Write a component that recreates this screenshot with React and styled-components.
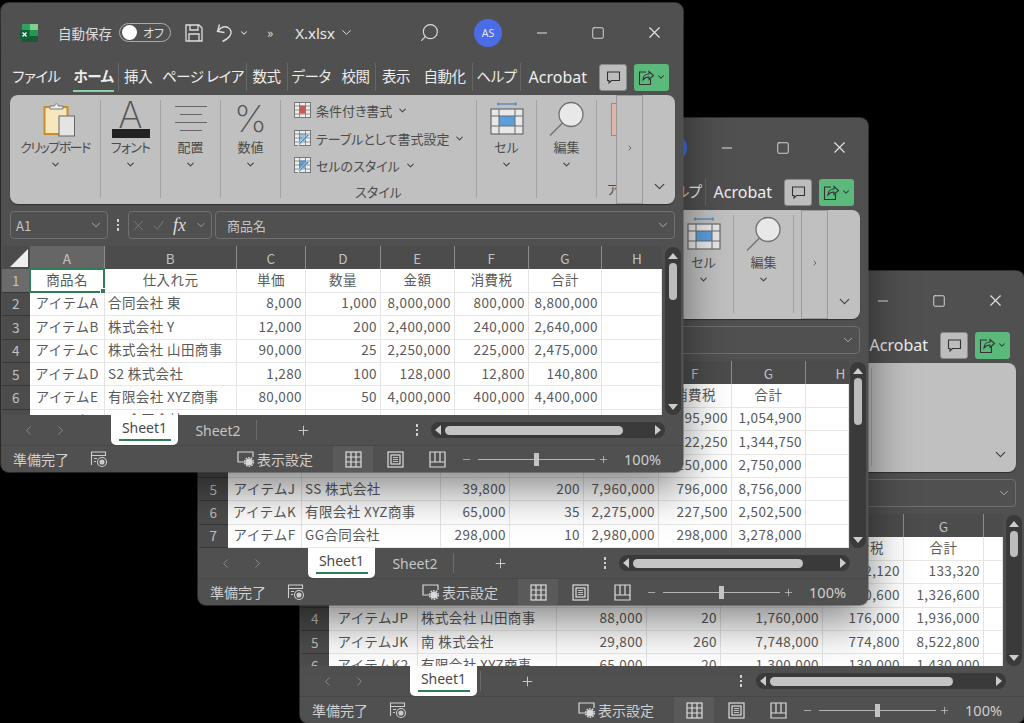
import React from "react";
import styled, { createGlobalStyle } from "styled-components";
import { ChevronDown, ChevronLeft, ChevronRight, Minus, Plus, Search, Square, X } from "lucide-react";

const GlobalStyle = createGlobalStyle`
  html, body {
    margin: 0;
    background: #000;
  }
  #root {
    position: relative;
    width: 1024px;
    height: 723px;
    overflow: hidden;
    font-family: "Noto Sans CJK JP", "Noto Sans", sans-serif;
  }
`;

const Frame = styled.section`
  position: absolute;
  left: ${(p) => p.$x}px;
  top: ${(p) => p.$y}px;
  width: ${(p) => p.$w}px;
  height: ${(p) => p.$h}px;
  display: flex;
  flex-direction: column;
  box-sizing: border-box;
  background: #505050;
  border-radius: 8px;
  overflow: hidden;
  box-shadow: 0 16px 46px rgba(0, 0, 0, 0.5), 0 0 0 1px rgba(110, 110, 110, 0.5);
  color: #e4e4e4;
`;

const TitleBar = styled.header`
  height: 59px;
  flex: none;
  display: flex;
  align-items: center;
  padding: 0 1px 0 18px;
`;

const AutoSave = styled.span`
  margin-left: 19px;
  font-size: 13.5px;
  font-feature-settings: "palt";
  white-space: nowrap;
  color: #ddd;
`;

const Toggle = styled.span`
  margin-left: 7px;
  width: 52px;
  height: 19px;
  box-sizing: border-box;
  display: flex;
  align-items: center;
  justify-content: space-between;
  padding: 0 6px 0 2px;
  border: 1px solid #aaa;
  border-radius: 10px;
  font-size: 12px;
  font-feature-settings: "palt";
  color: #ddd;
  &::before {
    content: "";
    width: 15px;
    height: 15px;
    border-radius: 50%;
    background: #fff;
  }
`;

const QuickIcon = styled.span`
  display: flex;
  margin-left: ${(p) => p.$gap}px;
  color: #ddd;
`;

const SearchIcon = styled(Search)`
  transform: scaleX(-1);
  color: #ddd;
`;

const Overflow = styled.span`
  margin-left: 18px;
  font-size: 13px;
  color: #ddd;
`;

const FileName = styled.span`
  margin-left: 22px;
  font-family: "Noto Sans", sans-serif;
  font-size: 15px;
  color: #e8e8e8;
`;

const TitleRight = styled.div`
  margin-left: auto;
  display: flex;
  align-items: center;
`;

const Avatar = styled.span`
  width: 28px;
  height: 28px;
  margin: 0 12px 0 34px;
  border-radius: 50%;
  background: #4a6ce6;
  display: flex;
  align-items: center;
  justify-content: center;
  font-family: "Noto Sans", sans-serif;
  font-size: 10.5px;
  color: #dfe6ff;
`;

const WinButton = styled.span`
  width: 56px;
  display: flex;
  justify-content: center;
  color: #e4e4e4;
`;

const TabRow = styled.nav`
  height: 33px;
  flex: none;
  box-sizing: border-box;
  display: flex;
  align-items: center;
  padding: 0 14px 3px 13px;
`;

const TabList = styled.div`
  display: flex;
  align-items: center;
  height: 100%;
`;

const Tab = styled.span`
  flex: none;
  box-sizing: border-box;
  width: ${(p) => p.$w}px;
  overflow: ${(p) => (p.$clip ? "hidden" : "visible")};
  margin-right: ${(p) => p.$gap || 0}px;
  display: flex;
  justify-content: ${(p) => (p.$clip ? "flex-start" : "center")};
  font-size: 14.5px;
  letter-spacing: -0.5px;
  line-height: 28px;
  white-space: nowrap;
  font-weight: ${(p) => (p.$active ? 700 : 400)};
  font-feature-settings: "palt";
  color: #ececec;
  border-bottom: 2px solid ${(p) => (p.$active ? "#8cd0a8" : "transparent")};
`;

const TabDivider = styled.i`
  flex: none;
  width: 1px;
  height: 28px;
  margin: 0 4px 0 ${(p) => p.$before}px;
  background: #666;
`;

const TabRight = styled.div`
  margin-left: auto;
  display: flex;
  align-items: center;
`;

const AcrobatTab = styled.span`
  font-family: "Noto Sans", sans-serif;
  font-size: 16px;
  color: #eee;
`;

const CommentButton = styled.span`
  width: 28px;
  height: 27px;
  margin-left: 12px;
  box-sizing: border-box;
  display: flex;
  align-items: center;
  justify-content: center;
  border-radius: 3px;
  background: #bdbdbd;
  border: 1px solid #8a8a8a;
`;

const ShareButton = styled.span`
  width: 35px;
  height: 27px;
  margin-left: 7px;
  display: flex;
  align-items: center;
  justify-content: center;
  gap: 1px;
  border-radius: 3px;
  background: #5bb97b;
  color: #333;
`;

const Ribbon = styled.div`
  flex: none;
  height: 109px;
  margin: 0 8px 0 9px;
  display: flex;
  border-radius: 8px;
  overflow: hidden;
  background: #c0c0c0;
  box-shadow: 0 1px 1px rgba(0, 0, 0, 0.4);
  color: #4c4c4c;
`;

const GroupList = styled.div`
  flex: 1;
  min-width: 0;
  display: flex;
  overflow: hidden;
  padding: 5px 0 6px;
`;

const Group = styled.div`
  flex: none;
  width: ${(p) => p.$w}px;
  box-sizing: border-box;
  display: flex;
  flex-direction: column;
  align-items: center;
  border-right: ${(p) => (p.$last ? "none" : "1px solid #a3a3a3")};
`;

const BigIcon = styled.div`
  height: 38px;
  display: flex;
  align-items: center;
  justify-content: center;
  padding-left: ${(p) => p.$shift || 0}px;
`;

const GroupLabel = styled.span`
  font-size: 13px;
  line-height: 18px;
  white-space: nowrap;
  font-feature-settings: "palt";
  letter-spacing: ${(p) => p.$track || 0}px;
`;

const BottomLabel = styled(GroupLabel)`
  margin-bottom: -3px;
`;

const GroupChevron = styled.span`
  display: flex;
  margin-top: 3px;
  color: #444;
`;

const FontLetter = styled.span`
  display: block;
  font-family: "Inter", sans-serif;
  font-weight: 200;
  font-size: 37px;
  line-height: 29px;
  color: #555;
  text-align: center;
`;

const FontBar = styled.span`
  display: block;
  width: 38px;
  height: 9px;
  background: #222;
`;

const Percent = styled.span`
  font-family: "Inter", sans-serif;
  font-weight: 200;
  font-size: 37px;
  line-height: 38px;
  color: #555;
`;

const StyleRows = styled.div`
  flex: 1;
  align-self: stretch;
  margin-top: -3px;
  padding-left: 13px;
  display: flex;
  flex-direction: column;
`;

const StyleRow = styled.div`
  height: 27.5px;
  flex: none;
  display: flex;
  align-items: center;
  gap: 5px;
  font-size: 13px;
  font-feature-settings: "palt";
  white-space: nowrap;
`;

const ClippedLabel = styled(GroupLabel)`
  align-self: flex-start;
  margin: auto 0 0 10px;
`;

const ClippedIcon = styled.span`
  display: block;
  align-self: flex-start;
  width: 10px;
  height: 33px;
  margin: 3px 0 0 14px;
  box-sizing: border-box;
  border: 1px solid #c9786c;
  background: #e0b5ac;
`;

const OverflowPanel = styled.div`
  flex: none;
  width: 27px;
  box-sizing: border-box;
  display: flex;
  align-items: center;
  justify-content: center;
  border: 1px solid #9a9a9a;
  color: #555;
  padding-bottom: 4px;
`;

const CollapseArea = styled.div`
  flex: none;
  width: 32px;
  display: flex;
  align-items: flex-end;
  justify-content: center;
  padding-bottom: 9px;
  color: #3c3c3c;
`;

const FormulaRow = styled.div`
  flex: none;
  height: 28px;
  margin: 7px 8px 7px 9px;
  display: flex;
  gap: 3px;
  color: #c4c4c4;
`;

const FieldBox = styled.div`
  flex: ${(p) => (p.$grow ? 1 : "none")};
  width: ${(p) => (p.$w ? `${p.$w}px` : "auto")};
  box-sizing: border-box;
  display: flex;
  align-items: center;
  gap: ${(p) => p.$gap || 9}px;
  padding: 0 4px 0 ${(p) => p.$pad}px;
  border: 1px solid #707070;
  border-radius: 4px;
  font-size: 13px;
`;

const FieldEnd = styled.span`
  display: flex;
  margin-left: auto;
  color: #bbb;
`;

const FxText = styled.span`
  font-family: "Liberation Serif", serif;
  font-style: italic;
  font-size: 18px;
  color: #ddd;
`;

const DotsBox = styled.span`
  width: 14px;
  display: flex;
  align-items: center;
  justify-content: center;
`;

const Dots = styled.span`
  display: flex;
  flex-direction: column;
  gap: 2px;
  i {
    display: block;
    width: 2.5px;
    height: 2.5px;
    background: #d0d0d0;
  }
`;

const GridArea = styled.div`
  flex: 1;
  min-height: 0;
  display: flex;
  padding-left: 1px;
`;

const SheetClip = styled.div`
  overflow: hidden;
`;

const Sheet = styled.div`
  display: grid;
  grid-template-columns: ${(p) => p.$cols};
  grid-auto-rows: 23.4px;
  font-size: 13.5px;
  letter-spacing: 0.4px;
`;

const Corner = styled.div`
  background: #4c4c4c;
  display: flex;
  align-items: flex-end;
  justify-content: flex-end;
  padding: 0 2px 2px 0;
  &::after {
    content: "";
    width: 0;
    height: 0;
    border-left: 18px solid transparent;
    border-bottom: 18px solid #ededed;
  }
`;

const ColHead = styled.div`
  display: flex;
  align-items: center;
  justify-content: center;
  box-sizing: border-box;
  padding-left: ${(p) => p.$shift || 0}px;
  background: ${(p) => (p.$on ? "#666" : "#4c4c4c")};
  border-right: 1px solid #8c8c8c;
  font-size: 13.5px;
  color: #c2c2c2;
  &:nth-child(9) {
    border-right: none;
  }
`;

const RowHead = styled.div`
  display: flex;
  align-items: center;
  justify-content: center;
  padding-bottom: 1px;
  background: ${(p) => (p.$on ? "#6b6b6b" : "#4c4c4c")};
  border-bottom: 1px solid #383838;
  box-sizing: border-box;
  color: #c2c2c2;
  font-size: 13.5px;
`;

const Cell = styled.div`
  position: relative;
  display: flex;
  align-items: center;
  justify-content: ${(p) => p.$align};
  padding: 0 ${(p) => (p.$align === "flex-end" ? 3 : 3)}px 3px;
  box-sizing: border-box;
  min-width: 0;
  overflow: ${(p) => (p.$selected ? "visible" : "hidden")};
  white-space: nowrap;
  background: #fff;
  border-right: 1px solid #e4e4e4;
  border-bottom: 1px solid #e8e8e8;
  color: #5a5a5a;
`;

const CellCursor = styled.span`
  position: absolute;
  inset: -1px;
  border: 2px solid #2f7d55;
  &::after {
    content: "";
    position: absolute;
    right: -3px;
    bottom: -3px;
    width: 4px;
    height: 4px;
    background: #2f7d55;
    border: 1px solid #fff;
  }
`;

const VScroll = styled.div`
  margin: 1px 2px 0 auto;
  width: 16px;
  flex: none;
  box-sizing: border-box;
  padding: 6px 0 5px;
  display: flex;
  flex-direction: column;
  align-items: center;
  border-radius: 8px;
  background: #3a3a3a;
`;

const VThumb = styled.span`
  width: 8px;
  height: ${(p) => p.$h}px;
  margin-top: 4px;
  border-radius: 4px;
  background: #bcbcbc;
`;

const Arrow = styled.span`
  width: 0;
  height: 0;
  border-style: solid;
  border-color: transparent;
  ${(p) => p.$dir === "up" && "border-width: 0 5px 6px; border-bottom-color: #ccc;"}
  ${(p) => p.$dir === "down" && "border-width: 6px 5px 0; border-top-color: #ccc; margin-top: auto;"}
  ${(p) => p.$dir === "left" && "border-width: 5px 6px 5px 0; border-right-color: #ccc;"}
  ${(p) => p.$dir === "right" && "border-width: 5px 0 5px 6px; border-left-color: #ccc; margin-left: auto;"}
`;

const SheetBar = styled.div`
  flex: none;
  height: 31px;
  display: flex;
  align-items: flex-start;
  padding: 0 18px 0 20px;
  border-bottom: 1px solid #474747;
  box-sizing: border-box;
`;

const NavArrows = styled.div`
  width: 90px;
  height: 30px;
  flex: none;
  display: flex;
  align-items: center;
  gap: 17px;
  color: #8c8c8c;
`;

const ActiveSheet = styled.div`
  width: 67px;
  height: 30px;
  flex: none;
  display: flex;
  flex-direction: column;
  align-items: center;
  box-sizing: border-box;
  padding-top: 2px;
  background: #fff;
  border-radius: 0 0 5px 5px;
  font-family: "Noto Sans", sans-serif;
  font-size: 14px;
  line-height: 22px;
  color: #4a4a4a;
  &::after {
    content: "";
    width: 52px;
    height: 2px;
    background: #2f7d55;
  }
`;

const SheetName = styled.span`
  width: 76px;
  margin-left: 2px;
  line-height: 32px;
  flex: none;
  text-align: center;
  font-family: "Noto Sans", sans-serif;
  font-size: 14px;
  color: #c4c4c4;
`;

const SheetDivider = styled.i`
  width: 1px;
  height: 20px;
  flex: none;
  margin: 5px 0 0 ${(p) => p.$before || 0}px;
  background: #6c6c6c;
`;

const AddSheet = styled.span`
  width: 92px;
  flex: none;
  height: 30px;
  display: flex;
  align-items: center;
  justify-content: center;
  color: #cfcfcf;
`;

const SheetRight = styled.div`
  margin-left: auto;
  display: flex;
  align-items: center;
  height: 30px;
`;

const HScroll = styled.div`
  width: ${(p) => p.$w}px;
  height: 16px;
  box-sizing: border-box;
  margin-left: ${(p) => p.$gap}px;
  padding: 0 4px;
  display: flex;
  align-items: center;
  border-radius: 8px;
  background: #3a3a3a;
`;

const HThumb = styled.span`
  width: ${(p) => p.$w}px;
  height: 9px;
  margin-left: 4px;
  border-radius: 5px;
  background: #c4c4c4;
`;

const StatusBar = styled.footer`
  flex: none;
  height: 26px;
  display: flex;
  align-items: stretch;
  padding: 0 22px 0 12px;
  font-size: 14px;
  color: #cfcfcf;
`;

const StatusItem = styled.span`
  display: flex;
  align-items: center;
  margin-left: ${(p) => p.$gap || 0}px;
  white-space: nowrap;
`;

const StatusRight = styled.div`
  margin-left: auto;
  display: flex;
  align-items: stretch;
`;

const ViewButton = styled.span`
  width: 40px;
  margin-left: ${(p) => p.$gap || 0}px;
  display: flex;
  align-items: center;
  justify-content: center;
  background: ${(p) => (p.$on ? "#5a5a5a" : "transparent")};
`;

const ZoomTrack = styled.span`
  position: relative;
  display: block;
  align-self: center;
  width: 117px;
  height: 1px;
  margin: 0 3px 0 6px;
  background: #b5b5b5;
  &::after {
    content: "";
    position: absolute;
    left: 56px;
    top: -6px;
    width: 5px;
    height: 13px;
    background: #c4c4c4;
  }
`;

const ZoomValue = styled.span`
  display: flex;
  align-items: center;
  margin-left: 15px;
  font-family: "Noto Sans", sans-serif;
  font-size: 14.5px;
`;

const ExcelLogo = () => (
  <svg width="20" height="20" viewBox="0 0 20 20">
    <rect x="3" y="1" width="16" height="18" rx="1.5" fill="#1f7a45" />
    <rect x="11" y="1" width="8" height="6" fill="#7fd08a" />
    <rect x="3" y="1" width="8" height="6" fill="#2fa35f" />
    <rect x="11" y="7" width="8" height="6" fill="#2b9355" />
    <rect x="3" y="13" width="16" height="6" fill="#155c35" />
    <rect x="1" y="7" width="9" height="9" rx="1" fill="#0f6236" />
    <path d="M3.5 9.5l4 4M7.5 9.5l-4 4" stroke="#fff" strokeWidth="1.3" />
  </svg>
);

const SaveIcon = () => (
  <svg width="18" height="18" viewBox="0 0 18 18" fill="none" stroke="currentColor" strokeWidth="1.3">
    <path d="M1 1h13l3 3v13H1z" />
    <path d="M5 1v5h8V1M4 17v-7h10v7" />
  </svg>
);

const UndoIcon = () => (
  <svg width="18" height="20" viewBox="0 0 18 20" fill="none" stroke="currentColor" strokeWidth="1.4">
    <path d="M3.500 1.500L1.500 8.500l7 1" />
    <path d="M2 8c3-4 7-5 10-3.500 3.500 2 4 6 1.500 9-1.500 2-4 3.500-7 5" />
  </svg>
);

const CancelMark = () => (
  <svg width="15" height="15" viewBox="0 0 15 15" fill="none" stroke="#858585" strokeWidth="1.100">
    <path d="M1 1l13 13M14 1L1 14" />
  </svg>
);

const EnterMark = () => (
  <svg width="16" height="14" viewBox="0 0 16 14" fill="none" stroke="#858585" strokeWidth="1.100">
    <path d="M1 8l5 5L15 1" />
  </svg>
);

const CommentIcon = () => (
  <svg width="15" height="15" viewBox="0 0 15 15" fill="none" stroke="#333" strokeWidth="1.1">
    <path d="M1.5 2h12v8.500H5.500L3 13v-2.500H1.500z" />
  </svg>
);

const ShareIcon = () => (
  <svg width="17" height="17" viewBox="0 0 17 17" fill="none" stroke="#333" strokeWidth="1.1">
    <path d="M8 3H1.500v12.500h11V10" />
    <path d="M5 11c0-4 3-6 6-6V2.500l4.500 4-4.500 4V8c-3 0-4.500 1-6 3z" />
  </svg>
);

const ClipboardIcon = () => (
  <svg width="33" height="35" viewBox="0 0 33 35">
    <rect x="1.500" y="5" width="23" height="27" fill="#f6e7bd" stroke="#c98d2b" strokeWidth="2" />
    <path d="M7 7V4h4.500c.5-3 3.500-3 4 0H20v3z" fill="#eee" stroke="#777" />
    <rect x="16" y="14" width="15.500" height="20" fill="#e4e4e4" stroke="#666" />
  </svg>
);

const AlignIcon = () => (
  <svg width="34" height="28" viewBox="0 0 34 28" stroke="#666" strokeWidth="1.2">
    <path d="M1 1.500h32M6 9.500h22M1 17.500h32M6 25.500h22" />
  </svg>
);

const CellIcon = () => (
  <svg width="34" height="34" viewBox="0 0 34 34">
    <path d="M8 2h18M8 .5v3M26 .5v3" stroke="#2f73b5" strokeWidth="1" fill="none" />
    <rect x="1" y="7" width="32" height="25" fill="#e8e8e8" stroke="#6a6a6a" strokeWidth="1.2" />
    <rect x="9" y="14" width="16" height="10" fill="#5a9fdb" />
    <path d="M1 14h32M1 24h32M9 7v25M25 7v25" stroke="#6a6a6a" strokeWidth="1" />
  </svg>
);

const FindIcon = () => (
  <svg width="36" height="36" viewBox="0 0 36 36">
    <circle cx="22" cy="13.500" r="12" fill="#e8e8e8" stroke="#707070" strokeWidth="1.300" />
    <path d="M13.500 22L1 34.500" stroke="#707070" strokeWidth="1.300" />
  </svg>
);

const StyleIcon = ({ fill, brush }) => (
  <svg width="17" height="17" viewBox="0 0 17 17">
    <rect x=".5" y=".5" width="16" height="15" fill="#eee" stroke="#777" />
    <rect x="5.500" y="3.500" width="6" height="8" fill={fill} />
    <path d="M.5 4h16M.5 8h16M.5 12h16M5.500 .5v15M11.500 .5v15" stroke="#777" strokeWidth=".8" fill="none" />
    {brush && <path d="M15.500 5l-9 9-2.500 2 1-3 8.500-9z" fill="#3a86c6" stroke="#eee" strokeWidth=".7" />}
  </svg>
);

const MacroIcon = () => (
  <svg width="18" height="18" viewBox="0 0 18 18" fill="none" stroke="#cfcfcf" strokeWidth="1.100">
    <path d="M1.500 15V2h14v4M1.500 5.500h14M4 8.500h3M4 11.500h2" />
    <circle cx="12" cy="12" r="4.500" />
    <circle cx="12" cy="12" r="2" fill="#cfcfcf" />
  </svg>
);

const DisplayIcon = () => (
  <svg width="18" height="16" viewBox="0 0 18 16" fill="none" stroke="#d8d8d8" strokeWidth="1.200">
    <path d="M8 11H1V1h15v5" />
    <circle cx="12" cy="11" r="3" fill="#d8d8d8" />
    <circle cx="12" cy="11" r="4.300" strokeDasharray="1.500 1.200" strokeWidth="1.600" />
  </svg>
);

const NormalViewIcon = () => (
  <svg width="17" height="17" viewBox="0 0 17 17" fill="none" stroke="#dcdcdc" strokeWidth="1.200">
    <rect x="1" y="1" width="15" height="15" />
    <path d="M1 6h15M1 11h15M6 1v15M11 1v15" />
  </svg>
);

const PageViewIcon = () => (
  <svg width="17" height="17" viewBox="0 0 17 17" fill="none" stroke="#dcdcdc" strokeWidth="1.200">
    <rect x="1" y="1" width="15" height="15" />
    <rect x="4" y="4" width="9" height="9" />
    <path d="M6 6.500h5M6 8.500h5M6 10.500h5" strokeWidth=".8" />
  </svg>
);

const BreakViewIcon = () => (
  <svg width="17" height="17" viewBox="0 0 17 17" fill="none" stroke="#dcdcdc" strokeWidth="1.200">
    <path d="M1 1h15v15H1zM1 11h15M6 1v10M11 1v10" />
  </svg>
);

const tabs = [
  { label: "ファイル", w: 45, gap: 14 },
  { label: "ホーム", w: 41, active: true },
  { divider: 4 },
  { label: "挿入", w: 30, gap: 9 },
  { label: "ページ レイアウト", clip: true },
  { divider: 2 },
  { label: "数式", w: 31 },
  { divider: 5 },
  { label: "データ", w: 38, gap: 10 },
  { label: "校閲", w: 31 },
  { divider: 4 },
  { label: "表示", w: 32, gap: 9 },
  { label: "自動化", w: 47 },
  { divider: 4 },
  { label: "ヘルプ", w: 39 },
  { divider: 4 },
];

const frontRows = [
  ["商品名", "仕入れ元", "単価", "数量", "金額", "消費税", "合計"],
  ["アイテムA", "合同会社 東", "8,000", "1,000", "8,000,000", "800,000", "8,800,000"],
  ["アイテムB", "株式会社 Y", "12,000", "200", "2,400,000", "240,000", "2,640,000"],
  ["アイテムC", "株式会社 山田商事", "90,000", "25", "2,250,000", "225,000", "2,475,000"],
  ["アイテムD", "S2 株式会社", "1,280", "100", "128,000", "12,800", "140,800"],
  ["アイテムE", "有限会社 XYZ商事", "80,000", "50", "4,000,000", "400,000", "4,400,000"],
  ["アイテムF", "GG合同会社", "298,000", "10", "2,980,000", "298,000", "3,278,000"],
];

const middleRows = [
  ["商品名", "仕入れ元", "単価", "数量", "金額", "消費税", "合計"],
  ["アイテムG", "合同会社 東", "13,700", "70", "959,000", "95,900", "1,054,900"],
  ["アイテムH", "株式会社 Y", "24,450", "50", "1,222,500", "122,250", "1,344,750"],
  ["アイテムI", "株式会社 山田商事", "50,000", "50", "2,500,000", "250,000", "2,750,000"],
  ["アイテムJ", "SS 株式会社", "39,800", "200", "7,960,000", "796,000", "8,756,000"],
  ["アイテムK", "有限会社 XYZ商事", "65,000", "35", "2,275,000", "227,500", "2,502,500"],
  ["アイテムF", "GG合同会社", "298,000", "10", "2,980,000", "298,000", "3,278,000"],
];

const backRows = [
  ["商品名", "仕入れ元", "単価", "数量", "金額", "消費税", "合計"],
  ["アイテムJA", "合同会社 東", "12,120", "10", "121,200", "12,120", "133,320"],
  ["アイテムJB", "株式会社 Y", "60,300", "20", "1,206,000", "120,600", "1,326,600"],
  ["アイテムJP", "株式会社 山田商事", "88,000", "20", "1,760,000", "176,000", "1,936,000"],
  ["アイテムJK", "南 株式会社", "29,800", "260", "7,748,000", "774,800", "8,522,800"],
  ["アイテムK2", "有限会社 XYZ商事", "65,000", "20", "1,300,000", "130,000", "1,430,000"],
];

const colLetters = ["A", "B", "C", "D", "E", "F", "G", "H"];

function SmallChevron() {
  return <ChevronDown size={11} strokeWidth={2.5} />;
}

function RibbonGroups() {
  return (
    <GroupList>
      <Group $w={91}>
        <BigIcon $shift={9}><ClipboardIcon /></BigIcon>
        <GroupLabel $track={-1.5}>クリップボード</GroupLabel>
        <GroupChevron><SmallChevron /></GroupChevron>
      </Group>
      <Group $w={60}>
        <BigIcon>
          <div>
            <FontLetter>A</FontLetter>
            <FontBar />
          </div>
        </BigIcon>
        <GroupLabel $track={-0.8}>フォント</GroupLabel>
        <GroupChevron><SmallChevron /></GroupChevron>
      </Group>
      <Group $w={60}>
        <BigIcon><AlignIcon /></BigIcon>
        <GroupLabel>配置</GroupLabel>
        <GroupChevron><SmallChevron /></GroupChevron>
      </Group>
      <Group $w={60}>
        <BigIcon><Percent>%</Percent></BigIcon>
        <GroupLabel>数値</GroupLabel>
        <GroupChevron><SmallChevron /></GroupChevron>
      </Group>
      <Group $w={196}>
        <StyleRows>
          <StyleRow><StyleIcon fill="#d9534f" />条件付き書式<SmallChevron /></StyleRow>
          <StyleRow><StyleIcon fill="#9cc3e6" brush />テーブルとして書式設定<SmallChevron /></StyleRow>
          <StyleRow><StyleIcon fill="#5a9fdb" brush />セルのスタイル<SmallChevron /></StyleRow>
        </StyleRows>
        <BottomLabel>スタイル</BottomLabel>
      </Group>
      <Group $w={60}>
        <BigIcon><CellIcon /></BigIcon>
        <GroupLabel>セル</GroupLabel>
        <GroupChevron><SmallChevron /></GroupChevron>
      </Group>
      <Group $w={60}>
        <BigIcon><FindIcon /></BigIcon>
        <GroupLabel>編集</GroupLabel>
        <GroupChevron><SmallChevron /></GroupChevron>
      </Group>
      <Group $w={40} $last>
        <ClippedIcon />
        <ClippedLabel>アドイン</ClippedLabel>
      </Group>
    </GroupList>
  );
}

function Spreadsheet({ cols, rows, letters, thumb, lastShift }) {
  return (
    <GridArea>
      <SheetClip>
        <Sheet $cols={cols.map((c) => `${c}px`).join(" ")}>
          <Corner />
          {letters.map((letter, i) => (
            <ColHead key={i} $on={i === 0} $shift={i === letters.length - 1 ? lastShift : 0}>{letter}</ColHead>
          ))}
          {rows.map((row, r) => (
            <React.Fragment key={r}>
              <RowHead $on={r === 0}>{r + 1}</RowHead>
              {row.map((text, c) => (
                <Cell key={c} $selected={r === 0 && c === 0} $align={r === 0 || c === 0 ? "center" : c === 1 ? "flex-start" : "flex-end"}>
                  {text}
                  {r === 0 && c === 0 && <CellCursor />}
                </Cell>
              ))}
              <Cell $align="flex-start" />
            </React.Fragment>
          ))}
        </Sheet>
      </SheetClip>
      <VScroll>
        <Arrow $dir="up" />
        <VThumb $h={thumb} />
        <Arrow $dir="down" />
      </VScroll>
    </GridArea>
  );
}

function ExcelWindow({ x, y, w, h, clipTab, cols, rows, letters, lastShift, thumb, ribbonBlank, second, dots, hWidth, hThumb }) {
  return (
    <Frame $x={x} $y={y} $w={w} $h={h}>
      <TitleBar>
        <ExcelLogo />
        <AutoSave>自動保存</AutoSave>
        <Toggle>オフ</Toggle>
        <QuickIcon $gap={14}><SaveIcon /></QuickIcon>
        <QuickIcon $gap={13}><UndoIcon /></QuickIcon>
        <QuickIcon $gap={5}><ChevronDown size={10} strokeWidth={2.5} /></QuickIcon>
        <Overflow>»</Overflow>
        <FileName>X.xlsx</FileName>
        <QuickIcon $gap={4}><ChevronDown size={15} strokeWidth={1.6} /></QuickIcon>
        <TitleRight>
          <SearchIcon size={21} strokeWidth={1.3} />
          <Avatar>AS</Avatar>
          <WinButton><Minus size={16} strokeWidth={1.5} /></WinButton>
          <WinButton><Square size={14} strokeWidth={1.5} /></WinButton>
          <WinButton><X size={19} strokeWidth={1.4} /></WinButton>
        </TitleRight>
      </TitleBar>
      <TabRow>
        <TabList>
          {tabs.map((tab, i) =>
            tab.divider ? (
              <TabDivider key={i} $before={tab.divider} />
            ) : (
              <Tab key={i} $active={tab.active} $gap={tab.gap} $clip={tab.clip} $w={tab.clip ? clipTab : tab.w}>
                {tab.label}
              </Tab>
            )
          )}
        </TabList>
        <TabRight>
          <AcrobatTab>Acrobat</AcrobatTab>
          <CommentButton><CommentIcon /></CommentButton>
          <ShareButton>
            <ShareIcon />
            <ChevronDown size={10} strokeWidth={2.5} />
          </ShareButton>
        </TabRight>
      </TabRow>
      <Ribbon>
        {ribbonBlank ? (
          <GroupList>
            <Group $w={563} />
          </GroupList>
        ) : (
          <>
            <RibbonGroups />
            <OverflowPanel><ChevronRight size={8} strokeWidth={2.5} /></OverflowPanel>
          </>
        )}
        <CollapseArea><ChevronDown size={17} strokeWidth={1.6} /></CollapseArea>
      </Ribbon>
      <FormulaRow>
        <FieldBox $w={98} $pad={5}>
          A1
          <FieldEnd><ChevronDown size={14} strokeWidth={1.5} /></FieldEnd>
        </FieldBox>
        <DotsBox><Dots><i /><i /><i /></Dots></DotsBox>
        <FieldBox $w={84} $pad={4} $gap={9}>
          <CancelMark />
          <EnterMark />
          <FxText>fx</FxText>
          <FieldEnd><ChevronDown size={12} strokeWidth={1.5} /></FieldEnd>
        </FieldBox>
        <FieldBox $grow $pad={11}>
          商品名
          <FieldEnd><ChevronDown size={14} strokeWidth={1.5} /></FieldEnd>
        </FieldBox>
      </FormulaRow>
      <Spreadsheet cols={cols} rows={rows} letters={letters} thumb={thumb} lastShift={lastShift} />
      <SheetBar>
        <NavArrows>
          <ChevronLeft size={15} strokeWidth={1.5} />
          <ChevronRight size={15} strokeWidth={1.5} />
        </NavArrows>
        <ActiveSheet>Sheet1</ActiveSheet>
        {second ? (
          <>
            <SheetName>Sheet2</SheetName>
            <SheetDivider />
          </>
        ) : (
          <SheetDivider $before={3} />
        )}
        <AddSheet><Plus size={15} strokeWidth={1.5} /></AddSheet>
        <SheetRight>
          <Dots><i /><i /><i /></Dots>
          <HScroll $w={hWidth} $gap={dots}>
            <Arrow $dir="left" />
            <HThumb $w={hThumb} />
            <Arrow $dir="right" />
          </HScroll>
        </SheetRight>
      </SheetBar>
      <StatusBar>
        <StatusItem>準備完了</StatusItem>
        <StatusItem $gap={21}><MacroIcon /></StatusItem>
        <StatusRight>
          <StatusItem><DisplayIcon /></StatusItem>
          <StatusItem $gap={2}>表示設定</StatusItem>
          <ViewButton $on $gap={20}><NormalViewIcon /></ViewButton>
          <ViewButton $gap={2}><PageViewIcon /></ViewButton>
          <ViewButton $gap={2}><BreakViewIcon /></ViewButton>
          <StatusItem $gap={4}><Minus size={11} strokeWidth={1.5} /></StatusItem>
          <ZoomTrack />
          <StatusItem><Plus size={11} strokeWidth={1.5} /></StatusItem>
          <ZoomValue>100%</ZoomValue>
        </StatusRight>
      </StatusBar>
    </Frame>
  );
}

export default function App() {
  return (
    <>
      <GlobalStyle />
      <ExcelWindow
        x={300} y={271} w={724} h={452}
        clipTab={82}
        cols={[28, 89, 139, 90, 74, 102, 81, 80, 19]}
        rows={backRows}
        letters={["A", "B", "C", "D", "E", "F", "G", ""]}
        lastShift={0}
        thumb={26}
        ribbonBlank
        dots={14}
        hWidth={250}
        hThumb={183}
      />
      <ExcelWindow
        x={198} y={118} w={670} h={487}
        clipTab={70}
        cols={[29, 74, 139, 69, 74, 75, 73, 74, 43]}
        rows={middleRows}
        letters={colLetters}
        lastShift={26}
        thumb={47}
        second
        dots={13}
        hWidth={231}
        hThumb={170}
      />
      <ExcelWindow
        x={1} y={3} w={682} h={469}
        clipTab={82}
        cols={[28, 75, 132, 69, 75, 74, 74, 73, 60]}
        rows={frontRows}
        letters={colLetters}
        lastShift={10}
        thumb={37}
        second
        dots={13}
        hWidth={234}
        hThumb={178}
      />
    </>
  );
}
